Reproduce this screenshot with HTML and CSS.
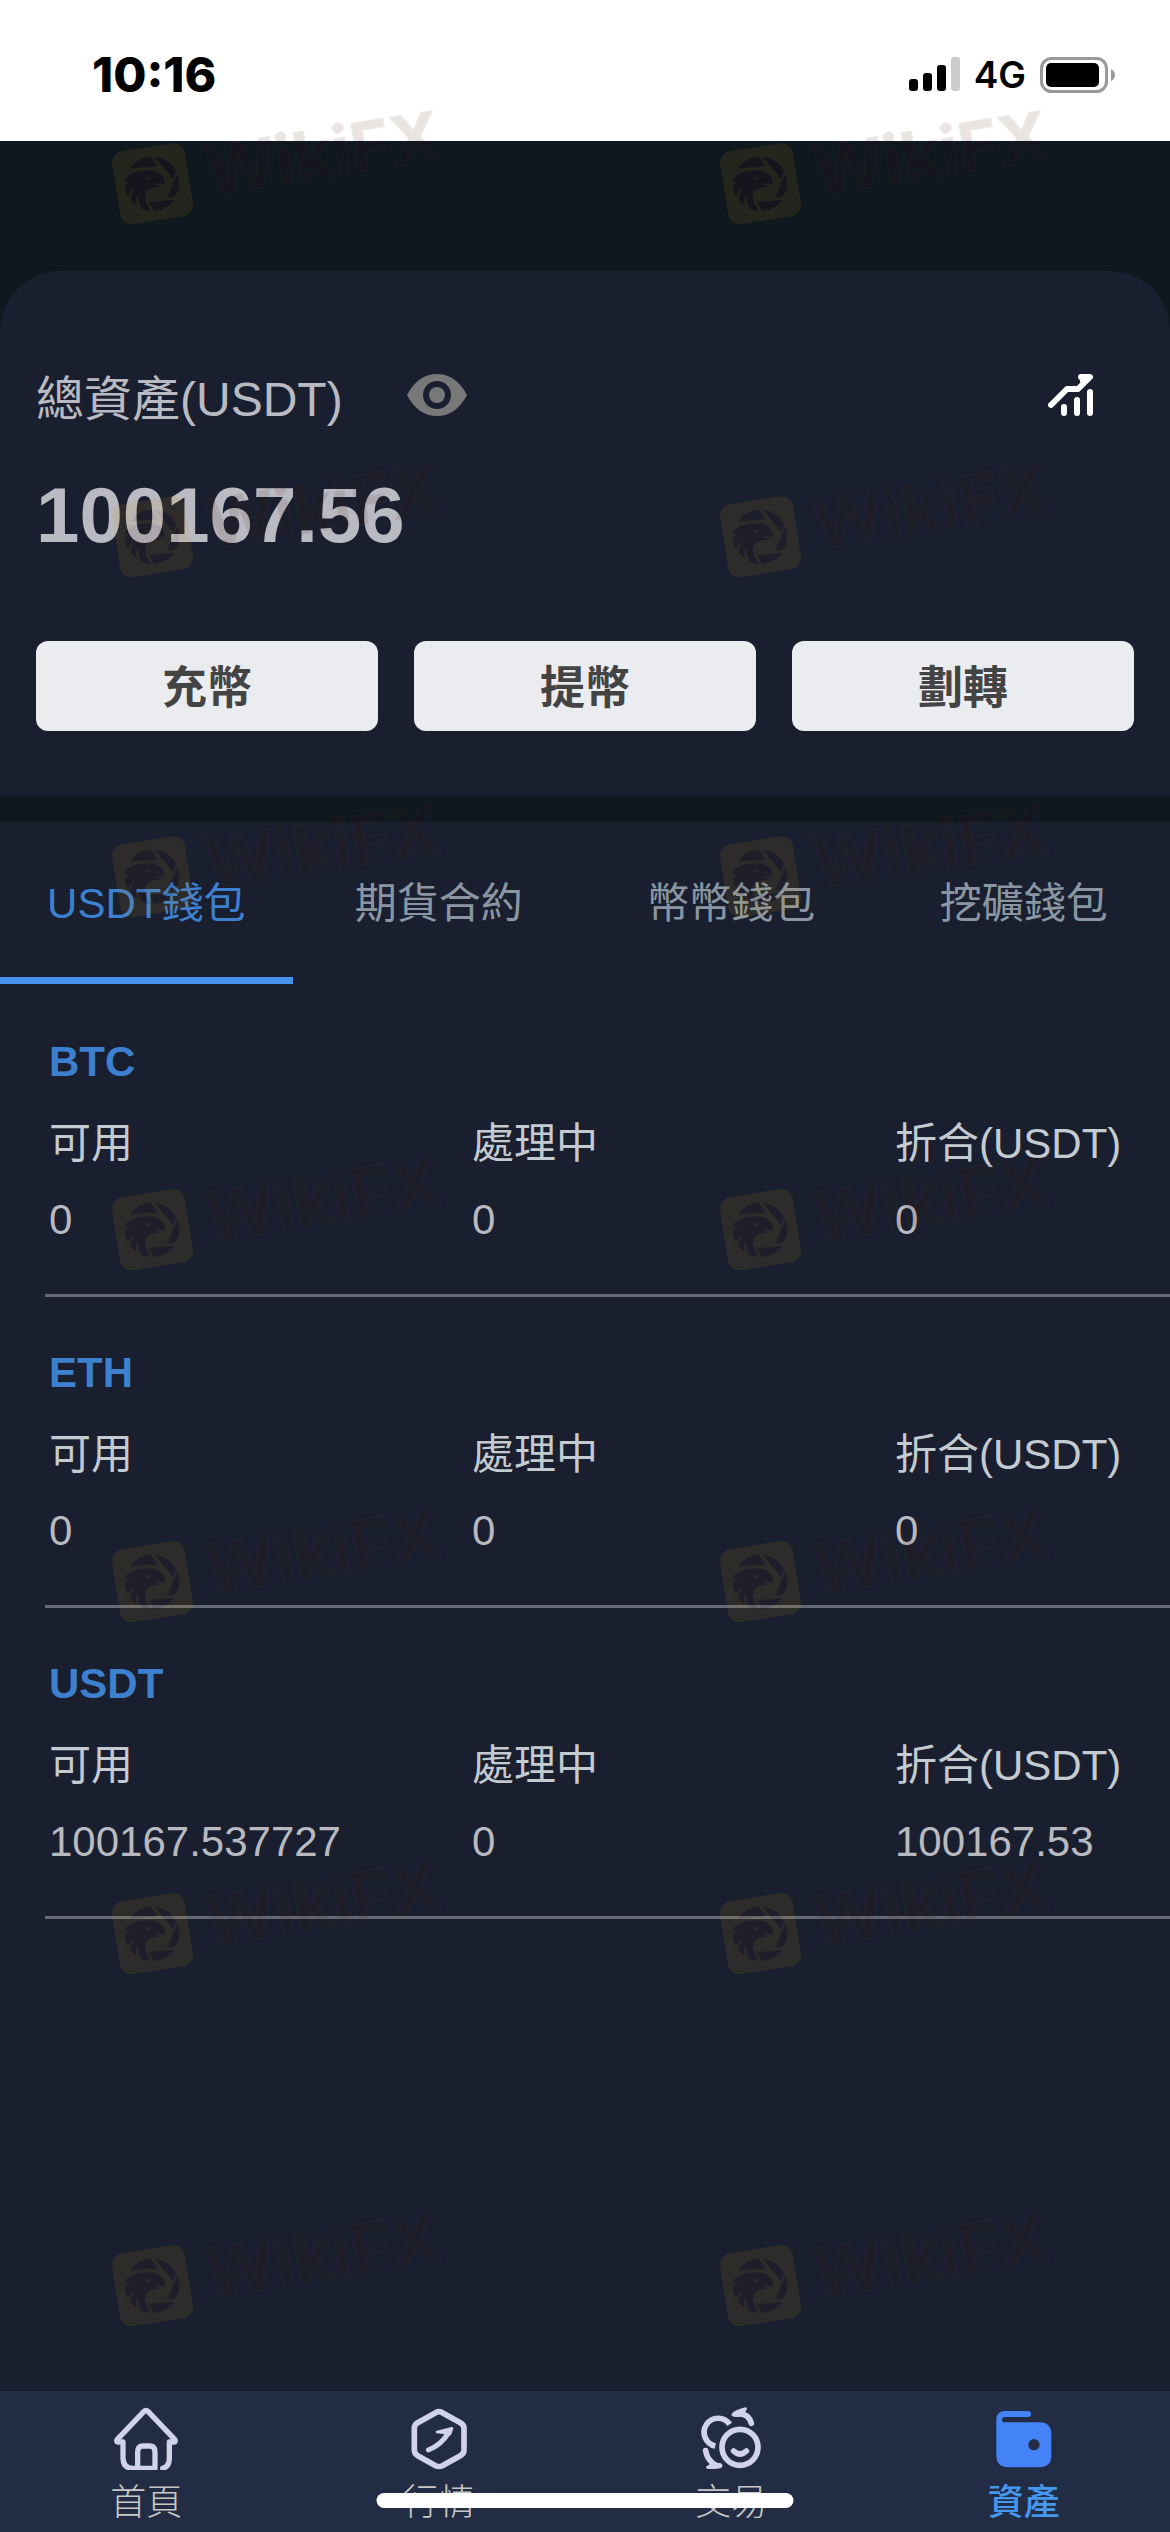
FILE: index.html
```html
<!DOCTYPE html>
<html lang="zh-Hant">
<head>
<meta charset="utf-8">
<meta name="viewport" content="width=device-width, initial-scale=1">
<title>資產</title>
<link rel="stylesheet" href="styles.css">
</head>
<body>
<svg class="defs" aria-hidden="true">
  <symbol id="eagle" viewBox="0 0 74 74">
    <rect width="74" height="74" rx="12" fill="#cf9614"/>
    <g transform="translate(37 37) rotate(9) scale(.333) translate(-142 -148)" fill="#46140f">
      <path d="M74 102 A82 82 0 0 1 138 66 L156 96 Z"/>
      <path d="M148 67 A82 82 0 0 1 212 108 L205 136 Z"/>
      <path d="M217 118 A82 82 0 0 1 210 188 L186 189 Z"/>
      <path d="M208 196 A82 82 0 0 1 146 229 L132 203 Z"/>
      <path fill-rule="evenodd" d="M62 128 Q84 107 130 107 Q164 108 174 128 Q181 138 177 151 Q172 147 160 147 L146 149 L168 154 L164 158 Q140 156 126 168 Q112 184 124 208 L136 230 Q120 229 110 223 Q96 206 100 178 Q88 196 96 215 Q84 208 76 196 Q76 178 88 162 Q72 172 68 186 Q60 172 58 154 L76 138 L59 144 Z M117 127 Q126 133 136 127 Q130 139 123 135Z"/>
    </g>
  </symbol>
</svg>
<div class="page">
  <header class="status">
    <span class="time">10:16</span>
    <div class="status-right">
      <svg width="51" height="35" viewBox="0 0 51 35" aria-hidden="true">
        <rect y="22" width="9" height="12" rx="3"/><rect x="14" y="16" width="9" height="18" rx="3"/><rect x="28" y="8" width="9" height="26" rx="3"/><rect x="42" width="9" height="34" rx="3" fill="#ccc"/>
      </svg>
      <span class="network">4G</span>
      <svg width="75" height="36" viewBox="0 0 75 36" aria-hidden="true">
        <rect x="1.5" y="1.5" width="65" height="33" rx="10" fill="none" stroke="#999" stroke-width="3"/>
        <rect x="6" y="6" width="53" height="24" rx="5"/><path d="M71 12 Q75 14 75 18 T71 24Z" fill="#999"/>
      </svg>
    </div>
  </header>

  <main class="content">
    <section class="summary">
      <div class="summary-head">
        <h1 class="summary-title">總資產(USDT)</h1>
        <button class="icon-button" type="button" aria-label="顯示資產">
          <svg width="60" height="42" viewBox="0 0 60 42"><path fill="#787878" fill-rule="evenodd" d="M0 21 Q11 0 30 0 T60 21 Q49 42 30 42 T0 21Z M44 21 A14 14 0 1 0 16 21 A14 14 0 1 0 44 21Z"/><circle cx="30" cy="21" r="8" fill="#787878"/></svg>
        </button>
        <button class="icon-button chart" type="button" aria-label="資產走勢">
          <svg width="48" height="42" viewBox="0 0 48 42" fill="none" stroke="#fff" stroke-width="6" stroke-linecap="round" stroke-linejoin="round"><path d="M5 31 L21 15 H32 L44 3 H35 M40 4 L37 7 M18 33 V39 M31 26 V39 M44 18 V39"/></svg>
        </button>
      </div>
      <p class="total">100167.56</p>
      <div class="actions">
        <button class="action" type="button">充幣</button>
        <button class="action" type="button">提幣</button>
        <button class="action" type="button">劃轉</button>
      </div>
    </section>

    <section class="wallets">
      <nav class="tabs">
        <a class="tab active" href="#usdt">USDT錢包</a>
        <a class="tab" href="#futures">期貨合約</a>
        <a class="tab" href="#spot">幣幣錢包</a>
        <a class="tab" href="#mining">挖礦錢包</a>
      </nav>
      <div class="coins">
        <article class="coin">
          <h2>BTC</h2>
          <dl><div><dt>可用</dt><dd>0</dd></div><div><dt>處理中</dt><dd>0</dd></div><div><dt>折合(USDT)</dt><dd>0</dd></div></dl>
        </article>
        <article class="coin">
          <h2>ETH</h2>
          <dl><div><dt>可用</dt><dd>0</dd></div><div><dt>處理中</dt><dd>0</dd></div><div><dt>折合(USDT)</dt><dd>0</dd></div></dl>
        </article>
        <article class="coin">
          <h2>USDT</h2>
          <dl><div><dt>可用</dt><dd>100167.537727</dd></div><div><dt>處理中</dt><dd>0</dd></div><div><dt>折合(USDT)</dt><dd>100167.53</dd></div></dl>
        </article>
      </div>
    </section>
  </main>

  <nav class="bottom">
    <a class="bottom-item" href="#home">
      <svg width="64" height="64" viewBox="0 0 192 192" fill="none" stroke="#d0d3ea" stroke-width="16" stroke-linecap="round" stroke-linejoin="round"><path d="M146 187 Q166 183 166 157 V108 H181 Q186 107 182 100 L102 16 Q96 10 90 16 L10 100 Q6 107 11 108 H27 V157 Q28 187 57 187 H123 V138 Q123 120 107 120 H87 Q71 120 71 138 V187"/></svg>
      <span>首頁</span>
    </a>
    <a class="bottom-item" href="#market">
      <svg width="64" height="64" viewBox="0 0 192 192" fill="none" stroke="#d0d3ea" stroke-width="17" stroke-linecap="round" stroke-linejoin="round"><path d="M86 20 Q96 14 106 20 L160 50 Q171 56 171 67 V132 Q171 143 160 149 L106 179 Q96 184 86 179 L32 149 Q22 143 22 132 V67 Q22 56 32 50Z"/><path stroke-width="15" d="M64 132 Q102 118 125 80"/><path stroke-width="8" fill="#d0d3ea" d="M90 78 L135 67 L129 84 L108 80Z"/></svg>
      <span>行情</span>
    </a>
    <a class="bottom-item" href="#trade">
      <svg width="64" height="64" viewBox="0 0 192 192" fill="none" stroke="#d0d3ea" stroke-width="17" stroke-linejoin="round"><circle cx="123" cy="124" r="54"/><path d="M92 55 A42 42 0 1 0 49 120"/><path stroke-linecap="round" d="M104 135 Q123 153 142 135 M157 52 Q148 20 115 24 M20 134 Q24 162 48 176"/><path stroke-width="8" stroke-linecap="round" fill="#d0d3ea" d="M140 8 Q108 16 101 26 Q104 32 130 26Z M25 184 Q50 187 64 182 Q70 177 62 175 L40 174Z"/></svg>
      <span>交易</span>
    </a>
    <a class="bottom-item active" href="#assets" aria-current="page">
      <svg width="64" height="64" viewBox="0 0 192 192"><path fill="#4482f8" fill-rule="evenodd" d="M39 15 H108 Q117 15 117 24 T108 33 H39 Q30 33 30 41 T39 49 H142 Q178 49 178 85 V148 Q178 184 142 184 H49 Q13 184 13 148 V41 Q13 15 39 15Z M143 116 A17 17 0 1 0 109 116 A17 17 0 1 0 143 116Z"/></svg>
      <span>資產</span>
    </a>
    <div class="home-indicator"></div>
  </nav>

  <div class="watermarks" aria-hidden="true">
    <div class="mark"><svg><use href="#eagle"/></svg><span>WikiFX</span></div>
    <div class="mark"><svg><use href="#eagle"/></svg><span>WikiFX</span></div>
    <div class="mark"><svg><use href="#eagle"/></svg><span>WikiFX</span></div>
    <div class="mark"><svg><use href="#eagle"/></svg><span>WikiFX</span></div>
    <div class="mark"><svg><use href="#eagle"/></svg><span>WikiFX</span></div>
    <div class="mark"><svg><use href="#eagle"/></svg><span>WikiFX</span></div>
    <div class="mark"><svg><use href="#eagle"/></svg><span>WikiFX</span></div>
    <div class="mark"><svg><use href="#eagle"/></svg><span>WikiFX</span></div>
    <div class="mark"><svg><use href="#eagle"/></svg><span>WikiFX</span></div>
    <div class="mark"><svg><use href="#eagle"/></svg><span>WikiFX</span></div>
    <div class="mark"><svg><use href="#eagle"/></svg><span>WikiFX</span></div>
    <div class="mark"><svg><use href="#eagle"/></svg><span>WikiFX</span></div>
    <div class="mark"><svg><use href="#eagle"/></svg><span>WikiFX</span></div>
    <div class="mark"><svg><use href="#eagle"/></svg><span>WikiFX</span></div>
  </div>
</div>
</body>
</html>
```
FILE: styles.css
```css
* { box-sizing: border-box; }

body, h1, h2, p, dl, dd { margin: 0; }

body {
  background: #0f171f;
  font-family: "Liberation Sans", "Noto Sans CJK TC", sans-serif;
}

a { color: inherit; text-decoration: none; }

button { border: 0; padding: 0; font-family: inherit; }

svg { display: block; flex: none; }

.defs { position: absolute; width: 0; height: 0; }

.page {
  position: relative;
  display: flex;
  flex-direction: column;
  min-height: 100vh;
}

/* status bar */
.status {
  display: flex;
  align-items: center;
  justify-content: space-between;
  height: 141px;
  padding: 8px 55px 0 92px;
  background: #fff;
  color: #000;
  font-family: Inter, sans-serif;
}

.time { font-size: 48px; font-weight: 800; }

.status-right { display: flex; align-items: center; gap: 14px; }

.network { font-size: 37px; font-weight: 600; }

/* content */
.content {
  display: flex;
  flex: 1;
  flex-direction: column;
  gap: 26px;
  padding-top: 130px;
}

.summary {
  padding: 99px 36px 65px;
  border-radius: 60px 60px 0 0;
  background: #191f2e;
  color: #babac2;
}

.summary-head { display: flex; align-items: flex-start; height: 60px; }

.summary-title { font-size: 48px; font-weight: 400; line-height: 60px; }

.icon-button { margin: 4px 0 0 64px; background: none; }

.chart { margin-left: auto; margin-right: 40px; }

.total {
  margin: 40px 0 81px;
  font-size: 78px;
  font-weight: 700;
  line-height: 90px;
}

.actions { display: grid; grid-template-columns: repeat(3, 1fr); gap: 36px; }

.action {
  height: 90px;
  padding-bottom: 4px;
  border-radius: 12px;
  background: #ebecf0;
  color: #444;
  font-size: 45px;
  font-weight: 700;
}

.wallets { flex: 1; background: #191f2e; }

.tabs { display: grid; grid-template-columns: repeat(4, 1fr); }

.tab {
  height: 162px;
  padding-top: 52px;
  border-bottom: 7px solid transparent;
  color: #8a97a3;
  font-size: 42px;
  line-height: 60px;
  text-align: center;
}

.tab.active { border-color: #4894ec; color: #3c80cf; }

.coins { padding: 2px 0 0 45px; }

.coin { padding: 46px 0 44px 4px; border-bottom: 3px solid #656973; }

.coin h2 { color: #3c80cf; font-size: 42px; line-height: 60px; }

.coin dl {
  display: grid;
  grid-template-columns: 423fr 423fr 275fr;
  margin-top: 22px;
  font-size: 42px;
  line-height: 60px;
}

.coin dt { color: #c3cad0; white-space: nowrap; }

.coin dd { margin-top: 16px; color: #b9bac0; }

/* bottom navigation */
.bottom {
  position: relative;
  display: grid;
  grid-template-columns: repeat(4, 1fr);
  padding: 15px 0 11px;
  background: #222c44;
}

.bottom-item {
  display: flex;
  flex-direction: column;
  align-items: center;
  gap: 7px;
  color: #c8c8c2;
  font-family: "Noto Sans CJK TC", sans-serif;
  font-size: 36px;
  font-weight: 300;
  line-height: 44px;
}

.bottom-item.active { color: #4697ee; font-weight: 500; }

.home-indicator {
  position: absolute;
  bottom: 24px;
  left: 50%;
  width: 417px;
  height: 15px;
  border-radius: 8px;
  background: #fff;
  transform: translateX(-50%);
}

/* repeated watermark */
.watermarks {
  position: absolute;
  inset: 0;
  display: grid;
  grid-template-columns: 52% 48%;
  grid-template-rows: 353px 340px 353px;
  grid-auto-rows: 352px;
  align-items: start;
  overflow: hidden;
  padding-top: 114px;
  pointer-events: none;
}

.mark {
  display: flex;
  align-items: center;
  gap: 17px;
  width: 327px;
  height: 100px;
  margin-left: 114px;
  opacity: 0.11;
  transform: rotate(-9deg);
}

.mark svg { width: 74px; height: 74px; }

.mark span {
  padding-bottom: 8px;
  color: #46140f;
  font-family: Inter, sans-serif;
  font-size: 68px;
  font-weight: 700;
  white-space: nowrap;
  -webkit-text-stroke: 1px #6b4a2a;
}
```
